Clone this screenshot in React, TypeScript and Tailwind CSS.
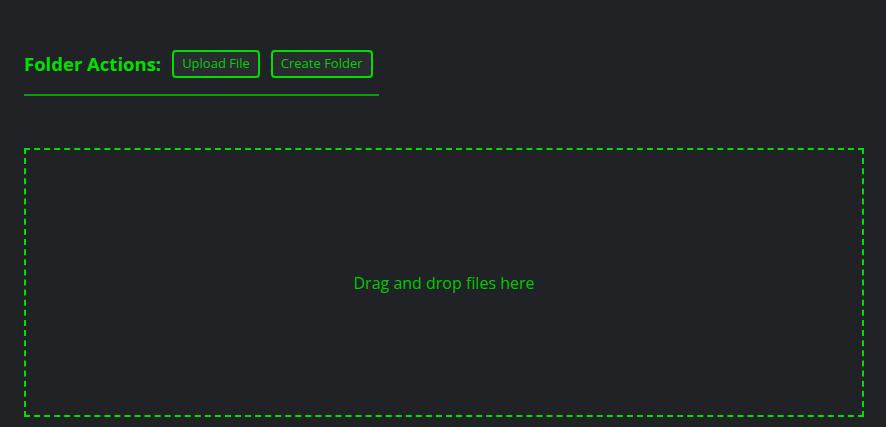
export default function App() {
  return (
    <div
      className="min-h-screen bg-[#212226] pl-6 pr-[22px] pt-[50px]"
      style={{ fontFamily: '"Open Sans", "Noto Sans", sans-serif' }}
    >
      <div className="inline-flex items-center gap-[11px] border-b-2 border-[#0a9e0a] pb-[16px] pr-[6px]">
        <h2 className="text-[18.5px] font-bold text-[#00e000]">Folder Actions:</h2>
        <button className="h-[28px] rounded-[4px] border-2 border-[#00e000] bg-[#2a2b30] px-[8px] text-[13px] text-[#00d000]">
          Upload File
        </button>
        <button className="h-[28px] rounded-[4px] border-2 border-[#00e000] bg-[#2a2b30] px-[8px] text-[13px] text-[#00d000]">
          Create Folder
        </button>
      </div>

      <div className="mt-[52px] flex h-[269px] items-center justify-center border-2 border-dashed border-[#00e000]">
        <p className="text-[16px] text-[#00c800]">Drag and drop files here</p>
      </div>
    </div>
  );
}
